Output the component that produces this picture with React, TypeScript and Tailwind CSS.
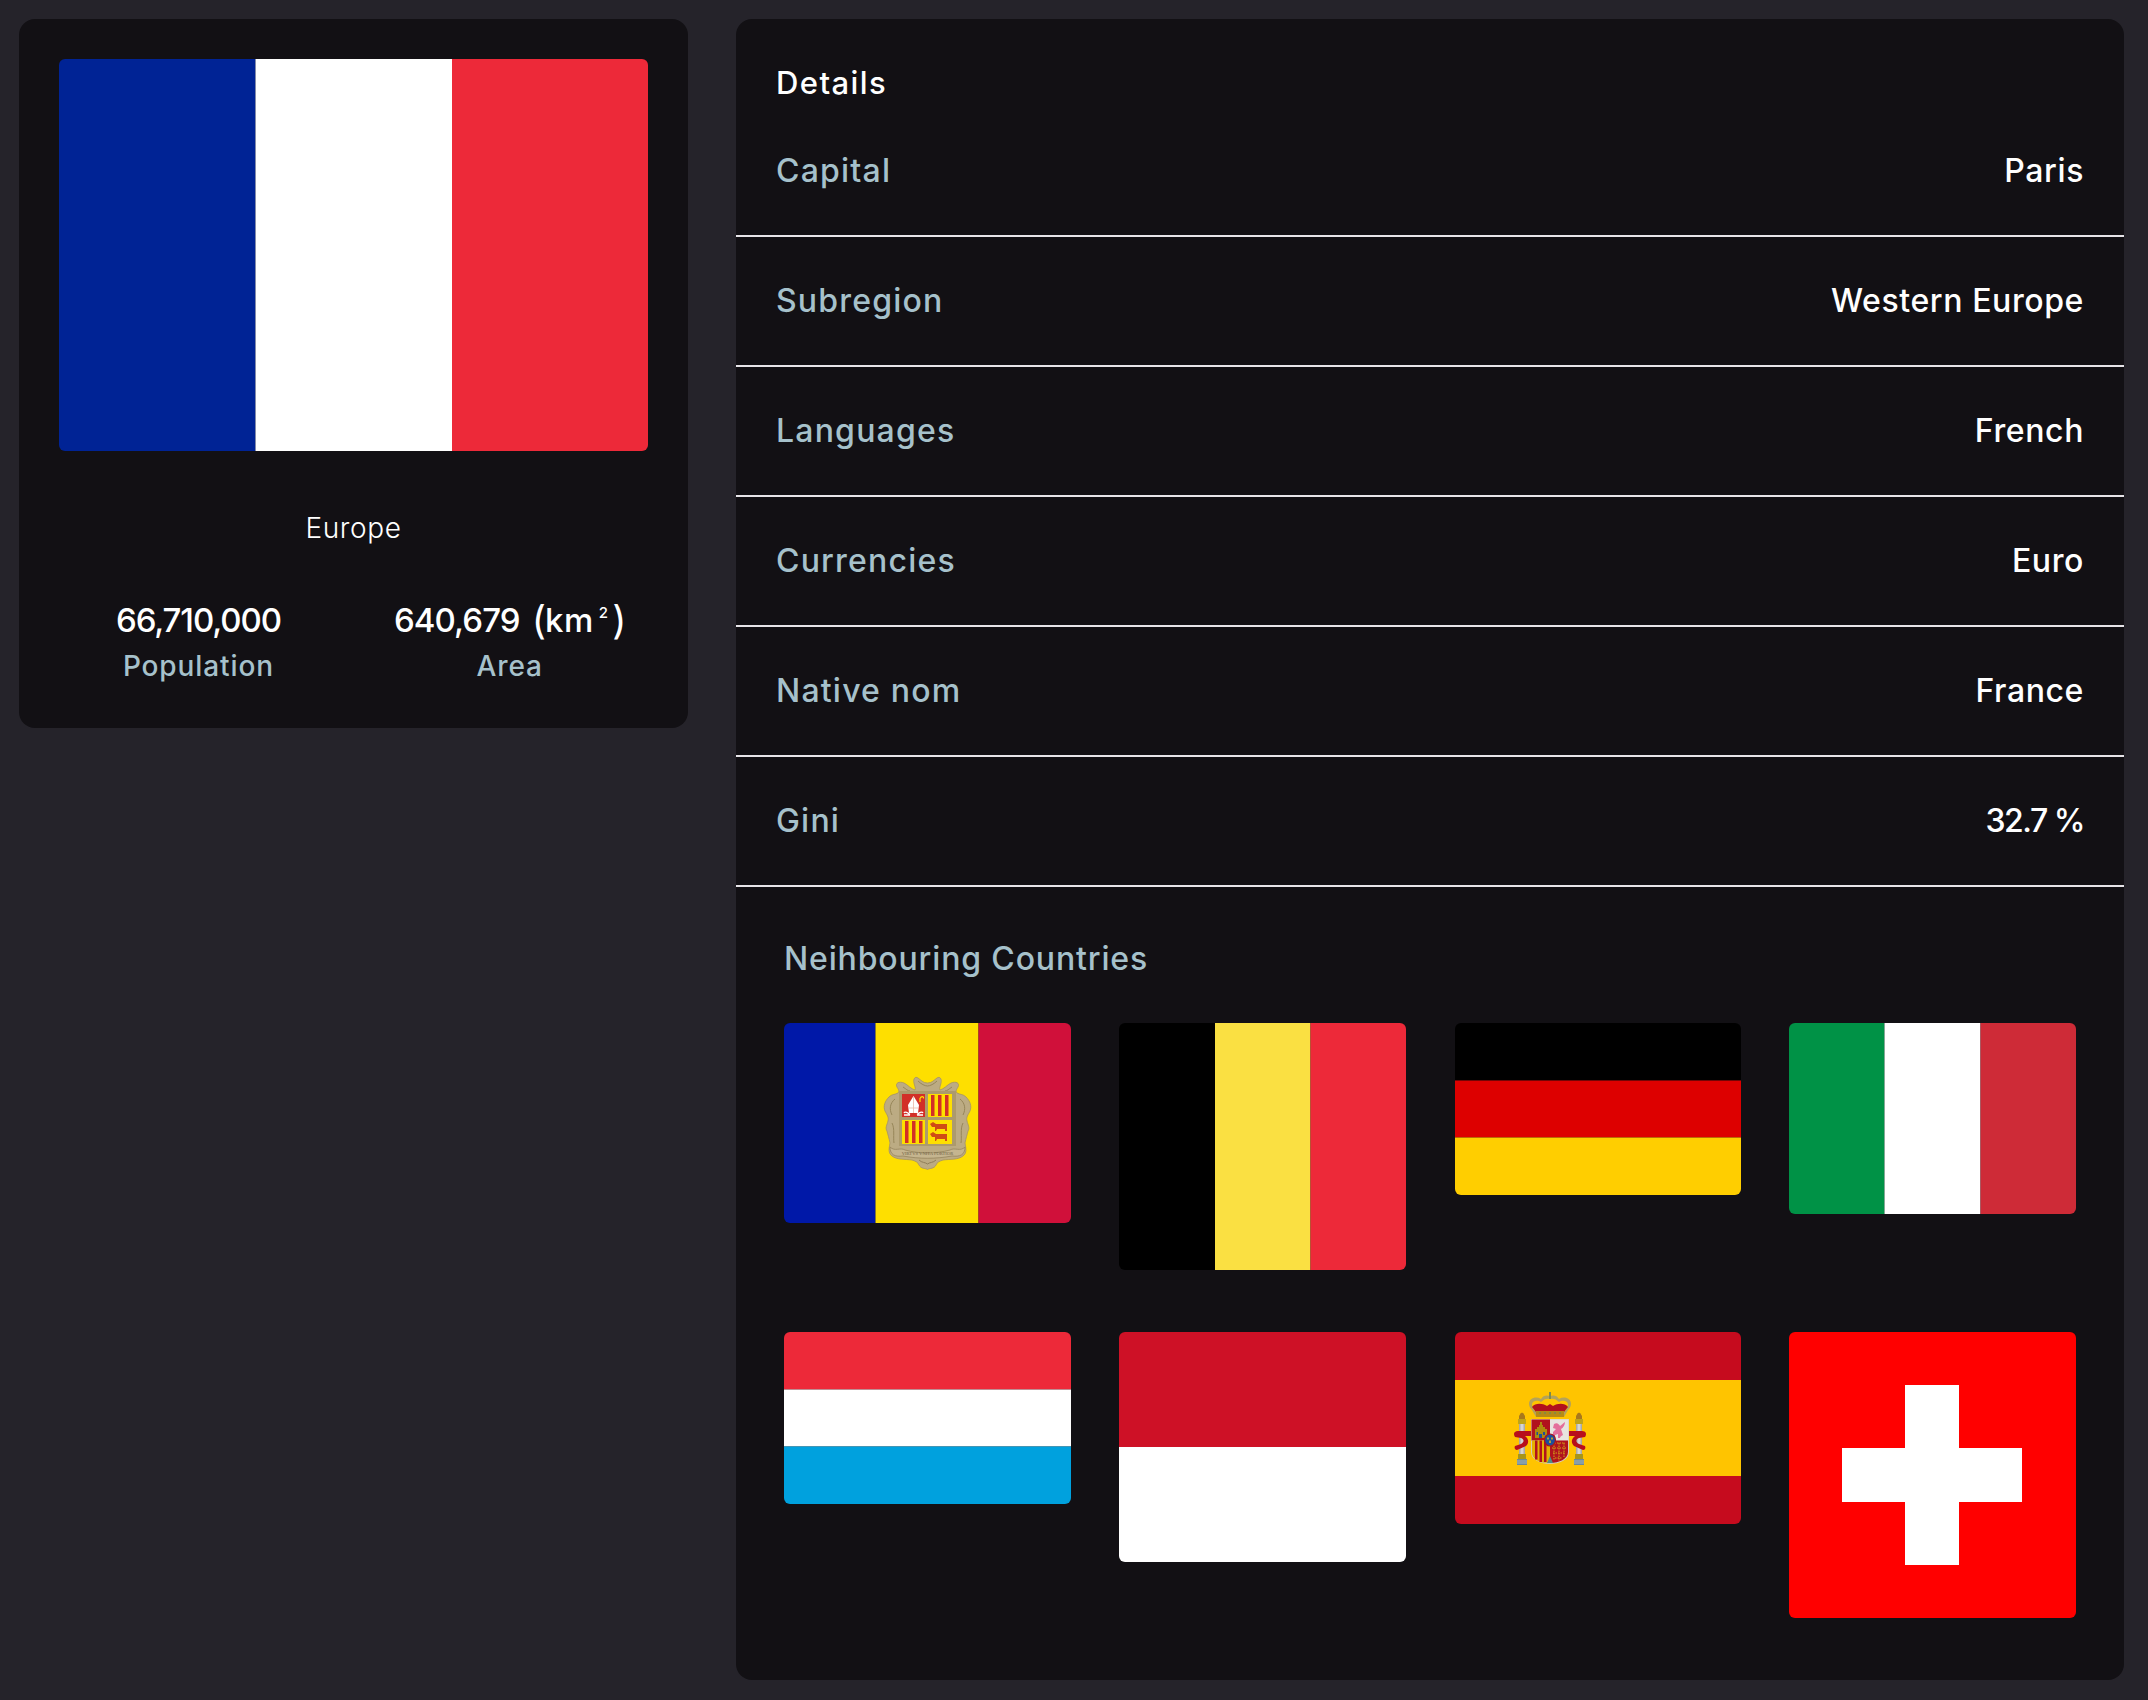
import React from "react";

const FONT = "font-['Inter','Liberation_Sans',sans-serif]";

type Stripe = { at: number; size: number; color: string };

const FlagFrame = ({ w, h, children, className = "" }: { w: number; h: number; children: React.ReactNode; className?: string }) => (
  <svg width={w} height={h} viewBox={`0 0 ${w} ${h}`} className={`block rounded-[6px] ${className}`}>
    {children}
  </svg>
);

const Vertical = ({ h, stripes }: { h: number; stripes: Stripe[] }) => (
  <>
    {stripes.map((s) => (
      <rect key={s.at} x={s.at} y={0} width={s.size} height={h} fill={s.color} />
    ))}
  </>
);

const Horizontal = ({ w, stripes }: { w: number; stripes: Stripe[] }) => (
  <>
    {stripes.map((s) => (
      <rect key={s.at} x={0} y={s.at} width={w} height={s.size} fill={s.color} />
    ))}
  </>
);

// coat of arms on the middle stripe, drawn in flag pixels
const AndorraArms = () => (
  <g>
    <path
      d="M143.5 60C139 60 137 57 134 55C131 53 129 56 130 60C130.500 63 132 65 131 67C127 66 124 62 120 60C115 58 111 60 113 64C114 66 116 68 114 70C110 72 108 71 105 74C101 78 99 83 101 88C103 92 105 94 104 98C103 102 101 105 103 108C104 112 105 115 106 120C105 126 104 130 108 133C113 137 121 136 128 137C131 138 134 139 135 142C137 146 141 145 143.500 146.500C146 145 150 146 152 142C153 139 156 138 159 137C166 136 174 137 179 133C183 130 182 126 181 120C182 115 183 112 184 108C186 105 184 102 183 98C182 94 184 92 186 88C188 83 186 78 182 74C179 71 177 72 173 70C171 68 173 66 174 64C176 60 172 58 167 60C163 62 160 66 156 67C155 65 156.500 63 157 60C158 56 156 53 153 55C150 57 148 60 143.500 60Z"
      fill="#bcab83"
      stroke="#a39268"
      strokeWidth="0.8"
    />
    <path d="M134 58C137 61 141 63 143.500 63C146 63 150 61 153 58M111 76C106 80 105 86 108 92M176 76C181 80 182 86 179 92M108 100C111 106 109 114 110 120M179 100C176 106 178 114 177 120M119 64C122 66 124 68 126 68M168 64C165 66 163 68 161 68" fill="none" stroke="#978659" strokeWidth="1" />
    <rect x={115} y={68} width={57} height={55} fill="#ac9a6d" />
    <rect x={118} y={71} width={23} height={23} fill="#d22f27" />
    <rect x={144} y={71} width={24} height={23} fill="#fedf00" />
    <rect x={118} y={97} width={23} height={24} fill="#fedf00" />
    <rect x={144} y={97} width={24} height={24} fill="#fedf00" />
    {[147, 154, 161].map((x) => (
      <rect key={x} x={x} y={72} width={3.500} height={21} fill="#d22f27" />
    ))}
    {[121, 128, 135].map((x) => (
      <rect key={x} x={x} y={98} width={3.500} height={22} fill="#d22f27" />
    ))}
    {/* mitre */}
    <path d="M129.500 73L135 82L134 90H125L124 82Z" fill="#fff" />
    <path d="M129.500 74V90M125 85H134" stroke="#e8b9a8" strokeWidth="0.8" />
    <path d="M120 90C121 88 124 90 126 91.500M139 90C138 88 135 90 133 91.500M120 92H126M133 92H139" fill="none" stroke="#fff" strokeWidth="1.300" />
    <path d="M136 75V79M136 75.500C137 73 140 73 139.500 75.500" fill="none" stroke="#fedf00" strokeWidth="1.200" />
    {/* cows */}
    <path d="M149 99L152 101H163V108H161V106H153L152 108H151V104H148L146 101Z" fill="#cf4b16" />
    <path d="M149 109L152 111H163V118H161V116H153L152 118H151V114H148L146 111Z" fill="#cf4b16" />
    {/* ribbon */}
    <path d="M106 124C111 129 116 124 121 127C136 131 151 131 166 127C171 124 176 129 181 124C181 132 176 134 168 133C152 136 135 136 119 133C111 134 106 132 106 124Z" fill="#c5b58f" stroke="#95845d" strokeWidth="0.8" />
    <text x={143.500} y={132} textAnchor="middle" fontSize={4.600} fill="#6f6144" className="font-['Liberation_Serif',serif]">VIRTVS VNITA FORTIOR</text>
    <path d="M135 137C138 140 141 139 143.500 141C146 139 149 140 152 137" fill="none" stroke="#8f7e58" strokeWidth="1" />
  </g>
);

const Pillar = ({ x }: { x: number }) => (
  <g>
    <path d={`M${x + 1} 84L${x + 2.500} 81.500L${x + 4} 80.500L${x + 5.500} 81.500L${x + 7} 84V87H${x + 1}Z`} fill="#a8781c" />
    <rect x={x} y={87} width={8} height={5} fill="#bfa419" />
    <rect x={x + 1} y={92} width={6} height={32} fill="#d5d5d5" />
    <rect x={x + 1} y={92} width={1.500} height={32} fill="#a9a9a9" />
    <rect x={x + 5.500} y={92} width={1.500} height={32} fill="#a9a9a9" />
    <rect x={x} y={122} width={8} height={5} fill="#a8951a" />
    <rect x={x - 1} y={127} width={10} height={6} fill="#6f8a94" />
    <path d={`M${x - 1} 129H${x + 9}M${x - 1} 131H${x + 9}`} stroke="#c9d2d6" strokeWidth="0.6" />
  </g>
);

const SpainArms = () => (
  <g>
    <Pillar x={63} />
    <Pillar x={120} />
    {/* ribbons */}
    <path d="M76 99H63C59 99 58 102 60 105L66 106C69 107 70 110 66 112L60 114C59 116 60 118 62 118L71 114C74 111 74 107 70 104H76Z" fill="#b80f1c" />
    <path d="M114 99H127C131 99 132 102 130 105L124 106C121 107 120 110 124 112L130 114C131 116 130 118 128 118L119 114C116 111 116 107 120 104H114Z" fill="#b80f1c" />
    {/* crown */}
    <path d="M74 72C74 66 81 64 86 67C88 63 92 63 95 64C98 63 102 63 104 67C109 64 116 66 116 72C116 75 114 77 113 78L109 85H81L77 78C76 77 74 75 74 72Z" fill="#b4a35a" />
    <path d="M77 72C78 68 83 68 86 70C89 67 92 66 95 67C98 66 101 67 104 70C107 68 112 68 113 72C113 75 112 77 110 79H80C78 77 77 75 77 72Z" fill="#fec400" />
    <path d="M77 75C80 71 87 71 92 74L95 72L98 74C103 71 110 71 113 75L109 80H81Z" fill="#b1121d" />
    <rect x={81} y={79} width={28} height={6} fill="#b68a16" />
    <path d="M84 81H86M89 81H91M94 81H96M99 81H101M104 81H106" stroke="#5f8a64" strokeWidth="1" />
    <rect x={94} y={60} width={2} height={7} fill="#7d8a4e" />
    {/* shield */}
    <path d="M76 87H114V120C114 128 104 132 95 132C86 132 76 128 76 120Z" fill="#d4ccb8" />
    <rect x={76.500} y={87.500} width={18.500} height={21} fill="#b1121d" />
    <rect x={95} y={87.500} width={18.500} height={21} fill="#e8e4e0" />
    <path d="M77 108.500H95V131C85 131 77 128 77 120Z" fill="#e3b100" />
    {[80, 84.500, 89].map((x) => (
      <rect key={x} x={x} y={108.500} width={2.500} height={x === 80 ? 19 : 21.500} fill="#b1121d" />
    ))}
    <path d="M95 108.500H113V120C113 127 104 131 95 131Z" fill="#b1121d" />
    <path d="M97 111H110M97 116H111M98 121H110M100 126H107M99 111V128M104 111V129M109 111V125" stroke="#d3a414" strokeWidth="1" strokeDasharray="1.500 1" fill="none" />
    {/* castle */}
    <path d="M80 97H82V95H84V93H85V90H87V93H88V95H90V97H92V106H80Z" fill="#ad8a0e" />
    <path d="M84 102H87V106H84ZM81.500 100H83V103H81.500ZM88 100H90V103H88Z" fill="#1f4f96" />
    {/* lion */}
    <path d="M99 92C102 90 104 92 105 94C107 93 108 91 110 90C110 93 108 96 106 97L108 103C106 104 105 105 105 106H103L103 102L100 103V106H98V100L101 97L98 96Z" fill="#e46f9b" />
    {/* centre oval */}
    <ellipse cx={95} cy={108} rx={5.500} ry={6} fill="#1c4f9c" stroke="#a8141f" strokeWidth="1.200" />
    <path d="M93 105.500V107.500M97 105.500V107.500M95 108.500V111" stroke="#d8b21c" strokeWidth="1.600" />
    <path d="M92 131L98 131L95 124Z" fill="#4e8d86" />
  </g>
);

const neighbours = [
  {
    name: "Andorra",
    w: 287,
    h: 200,
    art: (
      <>
        <Vertical h={200} stripes={[{ at: 0, size: 91.5, color: "#0018a8" }, { at: 91.5, size: 103, color: "#fedf00" }, { at: 194.5, size: 92.5, color: "#d0103a" }]} />
        <AndorraArms />
      </>
    ),
  },
  {
    name: "Belgium",
    w: 287,
    h: 247,
    art: <Vertical h={247} stripes={[{ at: 0, size: 96, color: "#000000" }, { at: 96, size: 95.5, color: "#fae042" }, { at: 191.5, size: 95.5, color: "#ed2939" }]} />,
  },
  {
    name: "Germany",
    w: 286,
    h: 172,
    art: <Horizontal w={286} stripes={[{ at: 0, size: 57.5, color: "#000000" }, { at: 57.5, size: 57, color: "#dd0000" }, { at: 114.5, size: 57.5, color: "#ffce00" }]} />,
  },
  {
    name: "Italy",
    w: 287,
    h: 191,
    art: <Vertical h={191} stripes={[{ at: 0, size: 95.5, color: "#009246" }, { at: 95.5, size: 96, color: "#ffffff" }, { at: 191.5, size: 95.5, color: "#ce2b37" }]} />,
  },
  {
    name: "Luxembourg",
    w: 287,
    h: 172,
    art: <Horizontal w={287} stripes={[{ at: 0, size: 57.5, color: "#ed2939" }, { at: 57.5, size: 57, color: "#ffffff" }, { at: 114.5, size: 57.5, color: "#00a1de" }]} />,
  },
  {
    name: "Monaco",
    w: 287,
    h: 230,
    art: <Horizontal w={287} stripes={[{ at: 0, size: 115, color: "#ce1126" }, { at: 115, size: 115, color: "#ffffff" }]} />,
  },
  {
    name: "Spain",
    w: 286,
    h: 192,
    art: (
      <>
        <Horizontal w={286} stripes={[{ at: 0, size: 48, color: "#c60b1e" }, { at: 48, size: 96, color: "#ffc400" }, { at: 144, size: 48, color: "#c60b1e" }]} />
        <SpainArms />
      </>
    ),
  },
  {
    name: "Switzerland",
    w: 287,
    h: 286,
    art: (
      <>
        <rect width={287} height={286} fill="#ff0000" />
        <rect x={116} y={53} width={54} height={180} fill="#ffffff" />
        <rect x={53} y={116} width={180} height={54} fill="#ffffff" />
      </>
    ),
  },
];

const details = [
  { label: "Capital", value: "Paris", valueClass: "tracking-[0.6px]" },
  { label: "Subregion", value: "Western Europe", valueClass: "tracking-[0.6px]" },
  { label: "Languages", value: "French", valueClass: "tracking-[0.6px]" },
  { label: "Currencies", value: "Euro", valueClass: "tracking-[0.6px]" },
  { label: "Native nom", value: "France", valueClass: "tracking-[0.6px]" },
  { label: "Gini", value: "32.7 %", valueClass: "tracking-[-1.5px]" },
];

export default function App() {
  return (
    <div className={`${FONT} flex min-h-[1700px] items-start gap-[48px] bg-[#25232a] pt-[19px] pr-[24px] pl-[19px]`}>
      <aside className="w-[669px] rounded-[16px] bg-[#121014] px-[40px] pt-[40px] pb-[37px]">
        <FlagFrame w={589} h={392}>
          <Vertical h={392} stripes={[{ at: 0, size: 196.5, color: "#002395" }, { at: 196.5, size: 196.5, color: "#ffffff" }, { at: 393, size: 196, color: "#ed2939" }]} />
        </FlagFrame>
        <p className="mt-[60px] text-center text-[28px] leading-[34px] font-light tracking-[0.6px] text-white">Europe</p>
        <div className="mt-[53px] flex gap-[113px] pl-[57px]">
          <div className="text-center">
            <p className="text-[33px] leading-[44px] font-medium tracking-[-1.1px] text-white">66,710,000</p>
            <p className="text-[28px] leading-[49px] font-medium tracking-[0.9px] text-[#a6c1cb]">Population</p>
          </div>
          <div className="text-center">
            <p className="flex items-center text-[33px] leading-[44px] font-medium tracking-[-0.9px] text-white">
              640,679
              <span className="ml-[12px] text-[39px] font-normal">(</span>
              <span className="tracking-[0.5px]">km</span>
              <sup className="mx-[5px] text-[15px]">2</sup>
              <span className="text-[39px] font-normal">)</span>
            </p>
            <p className="text-[28px] leading-[49px] font-medium tracking-[0.9px] text-[#a6c1cb]">Area</p>
          </div>
        </div>
      </aside>

      <main className="flex-1 rounded-[16px] bg-[#121014]">
        <h2 className="px-[40px] pt-[44px] text-[31px] leading-[40px] font-medium tracking-[1.4px] text-white">Details</h2>
        <dl className="mt-[26px]">
          {details.map((row, i) => (
            <div
              key={row.label}
              className={`flex items-center justify-between border-b-2 border-[#e6e4e8] px-[40px] ${i === 0 ? "h-[108px] pb-[23px]" : "h-[130px]"}`}
            >
              <dt className="text-[32px] font-medium tracking-[1.2px] text-[#a6c1cb]">{row.label}</dt>
              <dd className={`text-[32px] font-medium text-white ${row.valueClass}`}>{row.value}</dd>
            </div>
          ))}
        </dl>
        <section className="px-[48px] pt-[52px] pb-[62px]">
          <h3 className="text-[32px] leading-[40px] font-medium tracking-[0.85px] text-[#a6c1cb]">Neihbouring Countries</h3>
          <div className="mt-[44px] grid grid-cols-[repeat(4,287px)] gap-x-[48px] gap-y-[62px]">
            {neighbours.map((flag) => (
              <FlagFrame key={flag.name} w={flag.w} h={flag.h} className="justify-self-end">
                {flag.art}
              </FlagFrame>
            ))}
          </div>
        </section>
      </main>
    </div>
  );
}
